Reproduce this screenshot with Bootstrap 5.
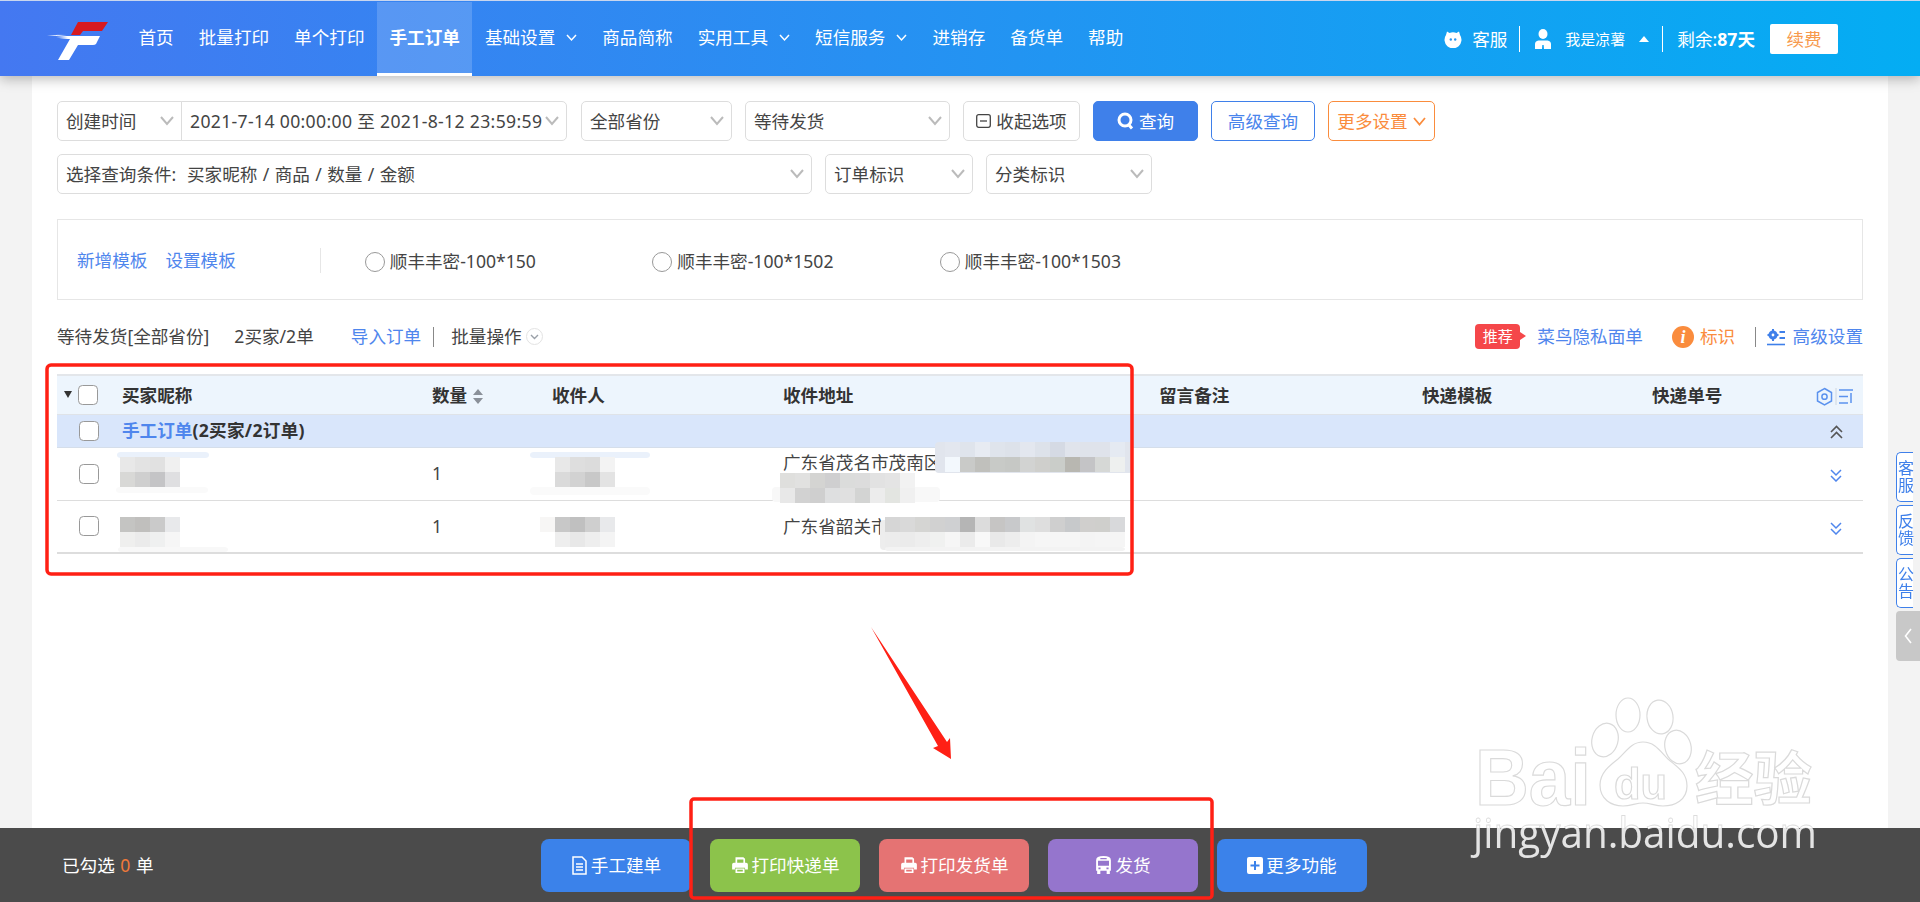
<!DOCTYPE html>
<html lang="zh-CN">

<head>
    <meta charset="UTF-8">
    <meta name="viewport" content="width=device-width, initial-scale=1.0">
    <title>手工订单</title>
    <link href="https://cdn.jsdelivr.net/npm/bootstrap@5.3.0/dist/css/bootstrap.min.css" rel="stylesheet">
    <style>
        html, body { height: 100%; overflow: hidden; }
        body {
            background: #f3f3f3;
            font-family: "Noto Sans", "Noto Sans CJK SC", sans-serif;
            font-size: 17.6px;
            color: #444;
            display: flex;
            flex-direction: column;
        }

        /* top bar */
        .top-bar {
            height: 76px;
            flex: none;
            padding-top: 1px;
            border-top: 1px solid #c9d6ee;
            background: linear-gradient(90deg, #4478f1, #04adf3);
            box-shadow: 0 3px 12px rgba(0, 0, 0, .28);
            position: relative;
            z-index: 2;
            color: #fff;
            align-items: stretch;
        }
        .top-logo { margin: 20px 18px 0 47px; width: 61px; height: 38px; }
        .top-link {
            display: flex;
            align-items: center;
            padding: 0 12.5px;
            color: #fff;
            text-decoration: none;
            border-bottom: 3px solid transparent;
        }
        .top-link svg { margin-left: 11px; }
        .top-link.on { background: rgba(255, 255, 255, .17); border-bottom-color: #fff; font-weight: 700; }
        .top-right { margin-left: auto; margin-right: 82px; align-items: center; }
        .top-sep { width: 1px; height: 26px; background: #fff; }
        .cat-icon { margin-right: 10px; }
        .sep-a { margin: 0 15px 0 12px; }
        .man-icon { margin-right: 14px; }
        .man-name { font-size: 15px; white-space: nowrap; }
        .man-caret { margin: 0 13px 0 14px; }
        .left-days { margin: 0 15px 0 14px; white-space: nowrap; }
        .renew-btn {
            width: 68px; height: 30px; background: #fff; color: #f79a4d; border-radius: 2px;
            font-size: 17.6px; padding: 0; border: 0;
        }

        /* page */
        .page-body { flex: 1; min-height: 0; margin: 0 32px; padding: 25px; background: #fff; }
        .filter-row { display: flex; gap: 13px; margin-bottom: 13px; height: 40px; }
        .filter-row .form-select, .filter-row .input-group { height: 40px; }
        .form-select.pick {
            font-size: 17.6px; color: #444; padding: 0 12px 0 8px; line-height: 38px; border-color: #ddd;
            border-radius: 5px;
            background-position: right 7px center; background-size: 14px 10px;
            background-image: url("data:image/svg+xml,%3csvg xmlns='http://www.w3.org/2000/svg' viewBox='0 0 14 10'%3e%3cpath fill='none' stroke='%23bbb' stroke-width='2' d='M1 1l6 7 6-7'/%3e%3c/svg%3e");
        }
        .date-group { width: 511px; flex: none; }
        .input-group > .form-select.w-kind { width: 125px; flex: none; }
        .input-group > .form-select.w-date { width: 386px; flex: none; letter-spacing: .34px; }
        .w-prov { width: 151px; }
        .w-state { width: 205px; }
        .w-cond { width: 755px; word-spacing: .8px; }
        .w-mark { width: 148px; }
        .w-sort { width: 166px; }
        .tool-btn {
            height: 40px; padding: 0; font-size: 17.6px; border-radius: 5px;
            display: inline-flex; align-items: center; justify-content: center; gap: 5px;
        }
        .btn-fold { width: 117px; border: 1px solid #ddd; color: #444; }
        .btn-query { width: 105px; background: #3f80ea; border: 1px solid #3f80ea; color: #fff; }
        .btn-adv { width: 104px; border: 1px solid #3f80ea; color: #4a85ec; }
        .btn-more { width: 107px; border: 1px solid #fa8c3d; color: #fa8c3d; }

        .tpl-box {
            height: 81px; margin-top: 25px; padding: 2px 0 0 19px; border: 1px solid #e6e6e6;
            display: flex; align-items: center;
        }
        .blue-link { color: #4f86ed; text-decoration: none; }
        .tpl-second { margin-left: 18px; }
        .tpl-sep { width: 1px; height: 25px; background: #e6e6e6; margin: 0 44px 0 84px; }
        .tpl-item { width: 287.5px; display: flex; align-items: center; gap: 5px; margin: 1px 0 0; }
        .tpl-item input { width: 20px; height: 20px; margin: 3px 0 0; border-color: #999; }

        .status-row { display: flex; align-items: center; height: 34px; margin: 19.5px 0 20.5px; }
        .count-text { margin-left: 25px; }
        .import-link { margin-left: 37px; }
        .thin-sep { width: 1px; height: 20px; background: #888; }
        .sep-b { margin: 0 17px 0 12px; }
        .sep-c { margin: 0 10.5px 0 20px; }
        .hot-tag {
            position: relative; width: 45px; height: 25px; background: #f5474a; color: #fff; border-radius: 4px;
            font-size: 15px; line-height: 24px; text-align: center; margin-right: 17px;
        }
        .hot-tag::after {
            content: ""; position: absolute; left: 45px; top: 8px;
            border-left: 6px solid #f5474a; border-top: 4px solid transparent; border-bottom: 4px solid transparent;
        }
        .cainiao-link { margin-right: 29px; }
        .info-dot {
            width: 22px; height: 22px; border-radius: 50%; background: #fa8c3d; color: #fff; margin-right: 6px;
            font: italic 700 18px/22px "Liberation Serif", serif; text-align: center;
        }
        .mark-text { color: #fa8c3d; }
        .round-caret {
            width: 17px; height: 17px; border-radius: 50%; border: 1px solid #e3e3e3; margin-left: 4px;
            display: inline-flex; align-items: center; justify-content: center;
        }

        /* orders */
        .order-table { table-layout: fixed; width: 1806px; margin: 0; border-top: 2px solid #e3e6ea; --bs-table-color: #444; }
        .order-table col.c1 { width: 55px; }
        .order-table col.c2 { width: 310px; }
        .order-table col.c3 { width: 120px; }
        .order-table col.c4 { width: 231px; }
        .order-table col.c5 { width: 376px; }
        .order-table col.c6 { width: 263px; }
        .order-table col.c7 { width: 230px; }
        .order-table col.c8 { width: 163px; }
        .order-table col.c9 { width: 58px; }
        .order-table th, .order-table td { padding: 0 10px; vertical-align: middle; font-size: 17.6px; border-bottom: 0; box-shadow: none; white-space: nowrap; }
        .order-table thead tr { height: 39px; }
        .order-table thead th { background: #edf5fd; color: #333; border-bottom: 1px solid #dfe3e8; }
        .order-table .group-row { height: 33px; }
        .order-table .group-row td { background: #d9e6fb; color: #333; font-weight: 700; border-bottom: 1px solid #d5deea; }
        .order-table .row-a { height: 53px; }
        .order-table .row-a td { border-bottom: 1px solid #ddd; }
        .order-table .row-b { height: 53px; }
        .order-table .row-b td { border-bottom: 2px solid #ddd; }
        .order-table td.addr-top { vertical-align: top; padding-top: 1px; }
        .order-table .check-cell { padding-left: 22px; padding-right: 0; }
        .order-table .check-head { padding-left: 7px; padding-right: 0; }
        .order-table .end-cell { padding-left: 25px; padding-right: 0; }
        .order-table .end-head { padding-left: 11px; padding-right: 0; }
        .group-count { letter-spacing: .3px; }
        .tick { width: 20px; height: 20px; margin: 0; border-color: #999; border-radius: 4px; display: block; }
        .head-caret {
            display: inline-block; border-top: 7px solid #333; border-left: 4.5px solid transparent; border-right: 4.5px solid transparent;
            margin-right: 6px;
        }

        /* bottom bar */
        .bottom-bar { height: 74px; flex: none; background: #4b4b4b; color: #fff; display: flex; align-items: center; position: relative; z-index: 2; }
        .picked { width: 541px; padding-left: 62px; font-size: 17.6px; word-spacing: 1px; }
        .picked b { color: #f0793a; font-weight: 400; }
        .act-btn {
            width: 150px; height: 53px; margin: 0 19px 0 0; padding: 0; border: 0; border-radius: 8px; color: #fff;
            font-size: 17.6px; display: inline-flex; align-items: center; justify-content: center; gap: 3px;
        }
        .act-blue { background: #3b82ea; }
        .act-green { background: #8cc34b; }
        .act-red { background: #e57373; }
        .act-purple { background: #9575cd; }

        /* floating dock on the right edge */
        .side-dock { position: fixed; right: 0; top: 452px; width: 24px; z-index: 3; }
        .side-tab {
            height: 50px; margin-bottom: 3px; background: #fff; color: #3f80ea; border: 1.5px solid #3f80ea; border-right: 0;
            border-radius: 5px 0 0 5px; font-size: 16px; line-height: 1; letter-spacing: 1px; writing-mode: vertical-rl; display: flex; align-items: center; justify-content: center;
        }
        .side-arrow { height: 50px; background: #c8c8c8; border-radius: 4px 0 0 4px; display: flex; align-items: center; justify-content: center; }

        /* mosaics, hand-drawn marks and watermark laid over the screenshot */
        .shot-layer { position: fixed; left: 0; top: 0; width: 1920px; height: 902px; z-index: 4; pointer-events: none; }
        .wm-latin { font-family: "Liberation Sans", sans-serif; font-weight: 700; }
        .wm-cjk { font-family: "Noto Sans CJK SC", sans-serif; font-weight: 700; }
        .wm-url { font-family: "Open Sans", sans-serif; font-size: 42px; }
    </style>
</head>

<body>
    <nav class="top-bar d-flex">
        <svg class="top-logo" viewBox="0 0 61 38">
            <path fill="#d7191f" d="M24 13 31 0h30l-6 9H36l-3 4z" />
            <path fill="#fff" d="M0 14h53l-4 8q-1 1-3 1H31l-9 15H11l12-21H12l9-1-12-1 11-1-11-1 12-1z" />
        </svg>
        <a class="top-link" href="#">首页</a>
        <a class="top-link" href="#">批量打印</a>
        <a class="top-link" href="#">单个打印</a>
        <a class="top-link on" href="#">手工订单</a>
        <a class="top-link" href="#">基础设置<svg width="11" height="8" viewBox="0 0 11 8"><path fill="none" stroke="#fff" stroke-width="1.5" d="M1 1l4.500 5 4.500-5" /></svg></a>
        <a class="top-link" href="#">商品简称</a>
        <a class="top-link" href="#">实用工具<svg width="11" height="8" viewBox="0 0 11 8"><path fill="none" stroke="#fff" stroke-width="1.5" d="M1 1l4.500 5 4.500-5" /></svg></a>
        <a class="top-link" href="#">短信服务<svg width="11" height="8" viewBox="0 0 11 8"><path fill="none" stroke="#fff" stroke-width="1.5" d="M1 1l4.500 5 4.500-5" /></svg></a>
        <a class="top-link" href="#">进销存</a>
        <a class="top-link" href="#">备货单</a>
        <a class="top-link" href="#">帮助</a>
        <div class="top-right d-flex">
            <svg class="cat-icon" width="18" height="18" viewBox="0 0 18 18"><path fill="#fff" d="M3 1.500l2.500 1.500q3.500-1.300 7 0L15 1.500q.7 2 1 3.500A8.500 8.500 0 1 1 2 5q.4-1.500 1-3.500z" /><circle cx="6.800" cy="9.500" r="1.200" fill="#2a96f0" /><circle cx="11.200" cy="9.500" r="1.200" fill="#2a96f0" /></svg>
            <span>客服</span>
            <span class="top-sep sep-a"></span>
            <svg class="man-icon" width="16" height="20" viewBox="0 0 16 20"><ellipse cx="8" cy="5" rx="4.500" ry="5" fill="#fff" /><path fill="#fff" d="M0 20v-5q0-3 3.500-3.500h9Q16 12 16 15v5h-7l-.3-4h-1.400L7 20z" /></svg>
            <span class="man-name">我是凉薯</span>
            <svg class="man-caret" width="10" height="6" viewBox="0 0 10 6"><path fill="#fff" d="M5 0l5 6H0z" /></svg>
            <span class="top-sep"></span>
            <span class="left-days">剩余:<b>87天</b></span>
            <button type="button" class="btn renew-btn">续费</button>
        </div>
    </nav>

    <main class="page-body">
        <div class="filter-row">
            <div class="input-group date-group">
                <select class="form-select pick w-kind"><option>创建时间</option></select>
                <select class="form-select pick w-date"><option>2021-7-14 00:00:00 至 2021-8-12 23:59:59</option></select>
            </div>
            <select class="form-select pick w-prov"><option>全部省份</option></select>
            <select class="form-select pick w-state"><option>等待发货</option></select>
            <button type="button" class="btn tool-btn btn-fold">
                <svg width="15" height="14" viewBox="0 0 15 14"><rect x=".7" y=".7" width="13.600" height="12.600" rx="2" fill="none" stroke="#444" stroke-width="1.300" /><path stroke="#444" stroke-width="1.300" d="M4 7h7" /></svg>收起选项
            </button>
            <button type="button" class="btn tool-btn btn-query">
                <svg width="17" height="18" viewBox="0 0 17 18"><circle cx="8" cy="8" r="6" fill="none" stroke="#fff" stroke-width="3" /><path stroke="#fff" stroke-width="3" d="M11.500 12.500l3.500 4" /></svg>查询
            </button>
            <button type="button" class="btn tool-btn btn-adv">高级查询</button>
            <button type="button" class="btn tool-btn btn-more">更多设置<svg width="13" height="9" viewBox="0 0 13 9"><path fill="none" stroke="#fa8c3d" stroke-width="1.800" d="M1 1l5.500 6.500L12 1" /></svg></button>
        </div>
        <div class="filter-row">
            <select class="form-select pick w-cond"><option>选择查询条件:&nbsp; 买家昵称 / 商品 / 数量 / 金额</option></select>
            <select class="form-select pick w-mark"><option>订单标识</option></select>
            <select class="form-select pick w-sort"><option>分类标识</option></select>
        </div>

        <div class="tpl-box">
            <a class="blue-link" href="#">新增模板</a>
            <a class="blue-link tpl-second" href="#">设置模板</a>
            <span class="tpl-sep"></span>
            <label class="tpl-item"><input class="form-check-input" type="radio" name="tpl">顺丰丰密-100*150</label>
            <label class="tpl-item"><input class="form-check-input" type="radio" name="tpl">顺丰丰密-100*1502</label>
            <label class="tpl-item"><input class="form-check-input" type="radio" name="tpl">顺丰丰密-100*1503</label>
        </div>

        <div class="status-row">
            <span>等待发货[全部省份]</span>
            <span class="count-text">2买家/2单</span>
            <a class="blue-link import-link" href="#">导入订单</a>
            <span class="thin-sep sep-b"></span>
            <span>批量操作</span>
            <span class="round-caret"><svg width="9" height="6" viewBox="0 0 9 6"><path fill="none" stroke="#9aa0a8" stroke-width="1.400" d="M1 1l3.500 3.500L8 1" /></svg></span>
            <span class="hot-tag ms-auto">推荐</span>
            <a class="blue-link cainiao-link" href="#">菜鸟隐私面单</a>
            <span class="info-dot">i</span>
            <span class="mark-text">标识</span>
            <span class="thin-sep sep-c"></span>
            <svg width="18" height="18" viewBox="0 0 18 18" class="me-2">
                <circle cx="6" cy="7" r="3" fill="none" stroke="#3f80ea" stroke-width="3.200" />
                <path stroke="#3f80ea" stroke-width="2" d="M6 1v2M6 11v2M0.500 7h2M9.500 7h2M12.500 4H18M12.500 10H18" />
                <path stroke="#3f80ea" stroke-width="1.600" d="M0 16.500h18" />
            </svg>
            <a class="blue-link" href="#">高级设置</a>
        </div>

        <table class="table order-table">
            <colgroup>
                <col class="c1"><col class="c2"><col class="c3"><col class="c4"><col class="c5"><col class="c6"><col class="c7"><col class="c8"><col class="c9">
            </colgroup>
            <thead>
                <tr>
                    <th class="check-head"><div class="d-flex align-items-center"><span class="head-caret"></span><input class="form-check-input tick" type="checkbox"></div></th>
                    <th>买家昵称</th>
                    <th>数量 <svg width="12" height="15" viewBox="0 0 12 15"><path fill="#8a9099" d="M6 0l5 6H1zM6 15l5-6H1z" /></svg></th>
                    <th>收件人</th>
                    <th>收件地址</th>
                    <th>留言备注</th>
                    <th>快递模板</th>
                    <th>快递单号</th>
                    <th class="end-head">
                        <svg width="38" height="20" viewBox="0 0 38 20">
                            <path fill="none" stroke="#5b92ee" stroke-width="1.500" d="M8.500 1.500l7 4v8.500l-7 4-7-4V5.500z" />
                            <circle cx="8.500" cy="9.700" r="2.600" fill="none" stroke="#5b92ee" stroke-width="1.500" />
                            <path stroke="#cfd6de" d="M20 1v17" />
                            <path stroke="#5b92ee" stroke-width="1.500" d="M23 3h14M23 9.500h9M23 16h9M35 6v10" />
                        </svg>
                    </th>
                </tr>
            </thead>
            <tbody>
                <tr class="group-row">
                    <td class="check-cell"><input class="form-check-input tick" type="checkbox"></td>
                    <td colspan="7"><a class="blue-link" href="#">手工订单</a><span class="group-count">(2买家/2订单)</span></td>
                    <td class="end-cell"><svg width="13" height="14" viewBox="0 0 13 14"><path fill="none" stroke="#555" stroke-width="1.600" d="M1 7l5.500-5.500L12 7M1 13l5.500-5.500L12 13" /></svg></td>
                </tr>
                <tr class="row-a">
                    <td class="check-cell"><input class="form-check-input tick" type="checkbox"></td>
                    <td></td>
                    <td>1</td>
                    <td></td>
                    <td class="addr-top">广东省茂名市茂南区</td>
                    <td></td><td></td><td></td>
                    <td class="end-cell"><svg width="12" height="13" viewBox="0 0 12 13"><path fill="none" stroke="#4f86ed" stroke-width="1.500" d="M1 1l5 5 5-5M1 7l5 5 5-5" /></svg></td>
                </tr>
                <tr class="row-b">
                    <td class="check-cell"><input class="form-check-input tick" type="checkbox"></td>
                    <td></td>
                    <td>1</td>
                    <td></td>
                    <td>广东省韶关市</td>
                    <td></td><td></td><td></td>
                    <td class="end-cell"><svg width="12" height="13" viewBox="0 0 12 13"><path fill="none" stroke="#4f86ed" stroke-width="1.500" d="M1 1l5 5 5-5M1 7l5 5 5-5" /></svg></td>
                </tr>
            </tbody>
        </table>
    </main>

    <footer class="bottom-bar">
        <div class="picked">已勾选 <b>0</b> 单</div>
        <button type="button" class="btn act-btn act-blue">
            <svg width="17" height="19" viewBox="0 0 17 19"><path fill="none" stroke="#fff" stroke-width="1.500" d="M2 1h9l4 4v13H2z" /><path stroke="#fff" stroke-width="1.500" d="M5 8h7M5 11h7M5 14h7" /></svg>手工建单
        </button>
        <button type="button" class="btn act-btn act-green">
            <svg width="18" height="18" viewBox="0 0 16 16"><g fill="#fff"><path d="M4 1h7l1.500 1.500V7H11V3H5.500v4H4z" /><path d="M1 7.500Q1 6 2.500 6h11Q15 6 15 7.500V12h-2.500v-1.500h-9V12H1z" /><path fill-rule="evenodd" d="M4 11h8v4H4zM5.500 12.200v1.600h5v-1.600z" /></g></svg>打印快递单
        </button>
        <button type="button" class="btn act-btn act-red">
            <svg width="18" height="18" viewBox="0 0 16 16"><g fill="#fff"><path d="M4 1h7l1.500 1.500V7H11V3H5.500v4H4z" /><path d="M1 7.500Q1 6 2.500 6h11Q15 6 15 7.500V12h-2.500v-1.500h-9V12H1z" /><path fill-rule="evenodd" d="M4 11h8v4H4zM5.500 12.200v1.600h5v-1.600z" /></g></svg>打印发货单
        </button>
        <button type="button" class="btn act-btn act-purple">
            <svg width="17" height="19" viewBox="0 0 16 18"><path fill="#fff" fill-rule="evenodd" d="M1 4q0-4 7-4t7 4v10h-1v3h-3v-3H5v3H2v-3H1zM2.800 4.500v4.700h10.400V4.500zM5 2h6v1H5zM3.200 11v1.500h2V11zM10.800 11v1.500h2V11z" /></svg>发货
        </button>
        <button type="button" class="btn act-btn act-blue">
            <svg width="16" height="17" viewBox="0 0 16 17"><path fill="#fff" fill-rule="evenodd" d="M2 0h12q2 0 2 2v13q0 2-2 2H2q-2 0-2-2V2q0-2 2-2zM7 4v3.500H3.500v2H7V13h2V9.500h3.500v-2H9V4z" /></svg>更多功能
        </button>
    </footer>

    <div class="side-dock">
        <div class="side-tab">客服</div>
        <div class="side-tab">反馈</div>
        <div class="side-tab">公告</div>
        <div class="side-arrow"><svg width="8" height="16" viewBox="0 0 8 16"><path fill="none" stroke="#fff" stroke-width="1.600" d="M7 1L1.500 8 7 15" /></svg></div>
    </div>

    <svg class="shot-layer" viewBox="0 0 1920 902">
        <defs>
            <!-- the watermark url is white above the footer and light grey on it -->
            <linearGradient id="urlFill" gradientUnits="userSpaceOnUse" x1="0" y1="800" x2="0" y2="870">
                <stop offset="0.4" stop-color="#fff" />
                <stop offset="0.4" stop-color="#e4e4e4" />
            </linearGradient>
            <linearGradient id="urlLine" gradientUnits="userSpaceOnUse" x1="0" y1="800" x2="0" y2="870">
                <stop offset="0.4" stop-color="#dcdcdc" />
                <stop offset="0.4" stop-color="#e4e4e4" stop-opacity="0" />
            </linearGradient>
        </defs>
        <g id="mosaics"></g>
        <!-- watermark -->
        <g fill="#fff" stroke="#dadada" stroke-width="1.200">
            <ellipse cx="1605" cy="740" rx="13" ry="17" transform="rotate(15 1605 740)" />
            <ellipse cx="1628" cy="715" rx="12" ry="17" />
            <ellipse cx="1660" cy="717" rx="13" ry="17" transform="rotate(-8 1660 717)" />
            <ellipse cx="1678" cy="747" rx="13" ry="17" transform="rotate(-15 1678 747)" />
            <path d="M1643 742c12 0 17 9 25 17 9 8 19 13 19 27 0 14-12 20-24 20-8 0-13-3-20-3-7 0-12 3-20 3-12 0-23-7-23-21 0-12 9-19 18-26 8-7 13-17 25-17z" />
            <text class="wm-latin" x="1475" y="805" font-size="80" textLength="116" lengthAdjust="spacingAndGlyphs">Bai</text>
            <text class="wm-latin" x="1614" y="799" font-size="44" textLength="53" lengthAdjust="spacingAndGlyphs">du</text>
            <text class="wm-cjk" x="1695" y="800" font-size="58" textLength="117" lengthAdjust="spacingAndGlyphs">经验</text>
        </g>
        <text class="wm-url" x="1473" y="848" textLength="344" lengthAdjust="spacingAndGlyphs" fill="url(#urlFill)" stroke="url(#urlLine)" stroke-width=".8">jingyan.baidu.com</text>
        <!-- red marks -->
        <g fill="none" stroke="#ff2015" stroke-width="3.500">
            <rect x="47" y="365" width="1085" height="209" rx="4" />
            <rect x="691" y="799" width="521" height="99" rx="3" />
        </g>
        <polygon fill="#ff2015" points="871,627 947,742 950,738 951,759 933,748 938,746" />
    </svg>

    <script>
        // x, y of the first tile, tile colours by row
        const mosaics = [
            [120, 457, ['e8e8e8 e3e3e3 e1e1e1 f0f0f0', 'd8d8d6 cfcfcf c4c4c6 dfdfe1']],
            [120, 517, ['c4c4c2 c0bfbd cacaca e8e9eb', 'efefee ebebeb eff0f0 f6f6f6']],
            [555, 457, ['e8e8e8 dedede dcdcdc f3f3f3', 'dadada d2d2d2 c8c8c8 e3e3e3']],
            [540, 517, ['f7f6f5 c8c8c8 c0c0c0 cfcfcf e8e9eb', 'ffffff eeeeee e8e8e8 eeeeee f4f4f4']],
            [945, 442, ['e3e7ef dfe4ec e7ebf2 dfe4ec dde2ea e3e7ef dde2ea d5dae4 e0e4ec dfe3eb dfe3eb e5eaf2', 'f3f8fd c9cac8 c0c0bc c8cac7 c6c8c5 d2d3d2 cfcfcc cacdc9 b8b7b1 c4c4c6 d6d8d6 eef0ef']],
            [780, 473, ['dfdfdd e1e1e0 d4d4d2 cfcfd0 dbdcdb dcdcdc e2e2e2 e4e4e4 f2f2f2', 'e8e8e8 d2d2d2 cfcfcf dedfe0 e0e0e0 d3d4d3 ececec e3e5e1 f0f0f0']],
            [885, 517, ['d6d6d6 d9d9d9 d5d5d3 d1d1d1 cfd0d2 b5b5b5 dcdcdc c6c5c4 c8c9cb e0e2e2 dedede cfcfcf c7c9cb d0cfcd cfcfcc d8d9db', 'ececec ebebeb eeeeee f0f1f0 f6f6f6 ebebeb f8f8f8 e9e9e9 ededed f4f4f4 f6f6f6 f6f6f6 f6f6f6 f4f4f4 f5f5f5 f5f5f5']]
        ];
        // soft smudges round the tiles: x, y, w, h, colour
        const smudges = [
            [117, 452, 92, 6, 'eaf1fb'], [116, 487, 92, 6, 'fafafa'], [118, 547, 110, 5, 'f8f8f8'],
            [530, 452, 120, 6, 'eaf1fb'], [530, 487, 120, 8, 'fafafa'],
            [935, 442, 198, 31, 'e1e5ed'], [772, 487, 168, 15, 'f8f8f8'], [880, 520, 10, 30, 'ededed'], [885, 547, 240, 4, 'f3f3f3']
        ];
        const layer = document.getElementById('mosaics');
        function addRect(x, y, w, h, fill, rx) {
            const r = document.createElementNS('http://www.w3.org/2000/svg', 'rect');
            r.setAttribute('x', x); r.setAttribute('y', y);
            r.setAttribute('width', w); r.setAttribute('height', h);
            r.setAttribute('fill', '#' + fill);
            if (rx) r.setAttribute('rx', rx);
            layer.appendChild(r);
        }
        smudges.forEach(s => addRect(s[0], s[1], s[2], s[3], s[4], 4));
        mosaics.forEach(([x, y, rows]) => {
            rows.forEach((row, i) => {
                row.split(' ').forEach((c, j) => addRect(x + j * 15, y + i * 15, 15, 15, c));
            });
        });
    </script>
    <script src="https://cdn.jsdelivr.net/npm/bootstrap@5.3.0/dist/js/bootstrap.bundle.min.js"></script>
</body>

</html>
